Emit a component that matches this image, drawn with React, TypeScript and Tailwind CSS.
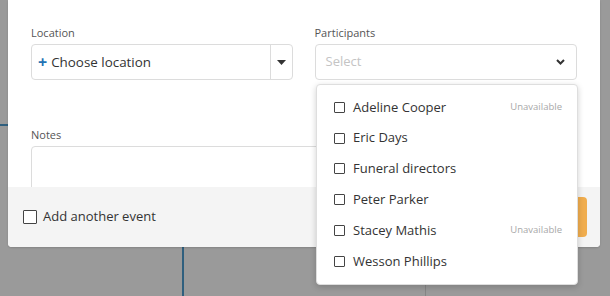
import React from "react";

const people: { name: string; unavailable?: boolean }[] = [
  { name: "Adeline Cooper", unavailable: true },
  { name: "Eric Days" },
  { name: "Funeral directors" },
  { name: "Peter Parker" },
  { name: "Stacey Mathis", unavailable: true },
  { name: "Wesson Phillips" },
];

export default function App() {
  return (
    <div
      className="relative w-[610px] h-[296px] overflow-hidden bg-[#9a9a9a]"
      style={{ fontFamily: '"Open Sans", "Liberation Sans", sans-serif' }}
    >
      {/* background page lines behind the overlay */}
      <div className="absolute left-0 top-[124px] w-[10px] h-[2px] bg-[#2f5f7e]" />
      <div className="absolute left-[182px] top-[240px] w-[2px] h-[60px] bg-[#2f5f7e]" />
      <div className="absolute left-[425px] top-[240px] w-[1px] h-[60px] bg-[#858585]" />

      {/* modal */}
      <div className="absolute left-[8px] top-0 w-[592px] h-[247px] flex flex-col bg-white rounded-b-[4px] overflow-hidden shadow-[0_1px_2px_rgba(0,0,0,0.15)]">
        <div className="h-[187px] overflow-hidden px-[23px] pt-[25px] flex flex-col">
          <div className="flex gap-[22px]">
            <div className="w-[262px] flex flex-col">
              <div className="text-[11px] leading-[16px] text-[#555] mb-[3px]">Location</div>
              <div className="h-[36px] flex border border-[#dcdcdc] rounded-[4px]">
                <div className="flex-1 flex items-center pl-[6px] text-[13.4px] text-[#333]">
                  <span className="text-[#2472b4] font-bold text-[16px] leading-none mr-[4px] -mt-[1px]">+</span>
                  Choose location
                </div>
                <div className="w-[22px] border-l border-[#dcdcdc] flex items-center justify-center">
                  <svg width="9" height="5" viewBox="0 0 9 5">
                    <path d="M0 0 H9 L4.5 5 Z" fill="#333" />
                  </svg>
                </div>
              </div>
            </div>
            <div className="w-[263px] flex flex-col">
              <div className="text-[11px] leading-[16px] text-[#555] mb-[3px]">Participants</div>
              <div className="h-[36px] flex items-center justify-between border border-[#dcdcdc] rounded-[4px] pl-[10px] pr-[11px]">
                <span className="text-[13px] text-[#c4c4c4]">Select</span>
                <svg width="9" height="6" viewBox="0 0 9 6">
                  <path d="M1 1 L4.5 4.5 L8 1" fill="none" stroke="#333" strokeWidth="2" />
                </svg>
              </div>
            </div>
          </div>
          <div className="mt-[47px] text-[11px] leading-[16px] text-[#555] mb-[3px]">Notes</div>
          <div className="h-[70px] w-[547px] border border-[#dcdcdc] rounded-[4px] shrink-0" />
        </div>
        <div className="flex-1 bg-[#f4f4f4] flex items-center pl-[15px] pr-[13px]">
          <div className="w-[14px] h-[14px] border-[1.5px] border-[#444] rounded-[1px] bg-white mr-[6px]" />
          <span className="text-[13px] text-[#333]">Add another event</span>
          <div className="ml-auto w-[100px] h-[40px] rounded-[4px] bg-[#f0ad4e]" />
        </div>
      </div>

      {/* dropdown menu */}
      <div className="absolute left-[316px] top-[84px] w-[262px] bg-white border border-[#dedede] rounded-[4px] shadow-[0_2px_6px_rgba(0,0,0,0.18)] py-[7px]">
        {people.map((p) => (
          <div key={p.name} className="h-[30.8px] flex items-center pl-[17px] pr-[15px]">
            <div className="w-[11px] h-[11px] border-[1.5px] border-[#444] rounded-[1px] mr-[8px]" />
            <span className="text-[13px] text-[#333] flex-1">{p.name}</span>
            {p.unavailable && <span className="text-[9.5px] text-[#a8a8a8]">Unavailable</span>}
          </div>
        ))}
      </div>
    </div>
  );
}
